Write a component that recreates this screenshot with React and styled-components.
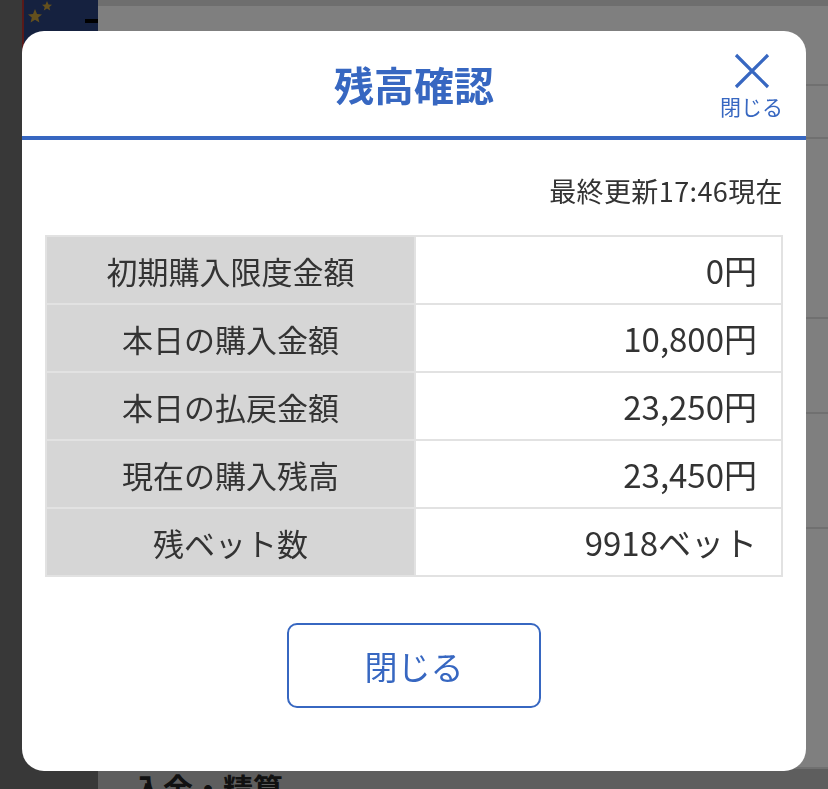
import React from 'react';
import styled, { createGlobalStyle } from 'styled-components';

const rows = [
    { label: '初期購入限度金額', value: '0円' },
    { label: '本日の購入金額', value: '10,800円' },
    { label: '本日の払戻金額', value: '23,250円' },
    { label: '現在の購入残高', value: '23,450円' },
    { label: '残ベット数', value: '9918ベット' },
];

export default function App() {
    return (
        <>
            <GlobalStyle />
            <Page>
                <Side>
                    <Card>
                        <svg width="40" height="30" viewBox="0 0 40 30">
                            <polygon points="23,1 24.5,4.5 28,4.8 25.3,7 26.2,10.5 23,8.6 19.8,10.5 20.7,7 18,4.8 21.5,4.5" fill="#c8a13a" />
                            <polygon points="11,9 13,14 18,14.4 14.2,17.6 15.4,22.5 11,19.8 6.6,22.5 7.8,17.6 4,14.4 9,14" fill="#c8a13a" />
                        </svg>
                        <CardDash />
                    </Card>
                </Side>
                <Main>
                    <MainTop />
                    <MainRow $h={80} />
                    <MainRow $h={53} />
                    <MainRow $h={180} />
                    <MainRow $h={95} />
                    <MainRow $h={115} />
                    <MainRow $h={240} />
                    <Section>
                        <SectionTitle>入金・精算</SectionTitle>
                    </Section>
                </Main>
            </Page>
            <Overlay>
                <Modal>
                    <Header>
                        <span />
                        <Title>残高確認</Title>
                        <CloseIcon>
                            <svg width="36" height="36" viewBox="0 0 36 36">
                                <path d="M2 2 L34 34 M34 2 L2 34" stroke="#3767c1" strokeWidth="3.2" fill="none" />
                            </svg>
                            <CloseLabel>閉じる</CloseLabel>
                        </CloseIcon>
                    </Header>
                    <Body>
                        <Updated>最終更新17:46現在</Updated>
                        <Table>
                            <tbody>
                                {rows.map((row) => (
                                    <tr key={row.label}>
                                        <LabelCell>{row.label}</LabelCell>
                                        <ValueCell>{row.value}</ValueCell>
                                    </tr>
                                ))}
                            </tbody>
                        </Table>
                        <CloseButton>閉じる</CloseButton>
                    </Body>
                </Modal>
            </Overlay>
        </>
    );
}

const GlobalStyle = createGlobalStyle`
    * {
        box-sizing: border-box;
    }
    body {
        margin: 0;
        font-family: "Noto Sans CJK JP", "Noto Sans", sans-serif;
        overflow: hidden;
    }
`
const Page = styled.div`
    display: flex;
    width: 828px;
    height: 789px;
`
const Side = styled.div`
    width: 98px;
    background: #707070;
    padding-left: 22px;
`
const Card = styled.div`
    position: relative;
    height: 140px;
    background: #2a427e;
    border-left: 2px solid #b03434;
`
const CardDash = styled.div`
    position: absolute;
    right: 0;
    top: 19px;
    width: 13px;
    height: 4px;
    background: #000;
`
const Main = styled.div`
    flex: 1;
    display: flex;
    flex-direction: column;
    background: #fff;
`
const MainTop = styled.div`
    height: 6px;
    background: #dcdcdc;
`
const MainRow = styled.div`
    height: ${(p) => p.$h}px;
    border-bottom: 2px solid #e0e0e0;
`
const Section = styled.div`
    flex: 1;
    background: #bdbdbd;
    padding-left: 35px;
    overflow: hidden;
`
const SectionTitle = styled.h2`
    margin: -4px 0 0;
    font-size: 30px;
    line-height: 44px;
    font-weight: 700;
    color: #222;
`
const Overlay = styled.div`
    position: fixed;
    inset: 0;
    background: rgba(0, 0, 0, 0.5);
    padding: 31px 22px 0;
`
const Modal = styled.div`
    width: 784px;
    height: 740px;
    background: #fff;
    border-radius: 22px;
    display: flex;
    flex-direction: column;
    overflow: hidden;
`
const Header = styled.div`
    display: grid;
    grid-template-columns: 1fr auto 1fr;
    align-items: center;
    height: 109px;
    border-bottom: 4px solid #3767c1;
    padding: 0 24px;
`
const Title = styled.h1`
    margin: 0;
    font-size: 40px;
    font-weight: 700;
    color: #3767c1;
`
const CloseIcon = styled.div`
    justify-self: end;
    align-self: start;
    display: flex;
    flex-direction: column;
    align-items: center;
    padding-top: 22px;
    margin-right: -1px;
    cursor: pointer;
`
const CloseLabel = styled.span`
    margin-top: 4px;
    font-size: 21px;
    line-height: 26px;
    color: #3767c1;
`
const Body = styled.div`
    display: flex;
    flex-direction: column;
    padding: 0 23px;
`
const Updated = styled.div`
    margin-top: 33px;
    text-align: right;
    font-size: 27px;
    line-height: 36px;
    letter-spacing: 0.4px;
    color: #333;
`
const Table = styled.table`
    margin-top: 26px;
    width: 100%;
    border-collapse: collapse;
    border: 2px solid #e2e2e2;
`
const LabelCell = styled.td`
    width: 369px;
    height: 68px;
    padding: 0;
    background: #d6d6d6;
    border: 2px solid #e2e2e2;
    text-align: center;
    font-size: 31px;
    color: #333;
`
const ValueCell = styled.td`
    height: 68px;
    padding: 0 24px 0 0;
    background: #fff;
    border: 2px solid #e2e2e2;
    text-align: right;
    font-size: 33px;
    color: #333;
`
const CloseButton = styled.button`
    align-self: center;
    margin-top: 46px;
    width: 254px;
    height: 85px;
    background: #fff;
    border: 2px solid #3767c1;
    border-radius: 10px;
    font-family: inherit;
    font-size: 33px;
    color: #3767c1;
    cursor: pointer;
`
